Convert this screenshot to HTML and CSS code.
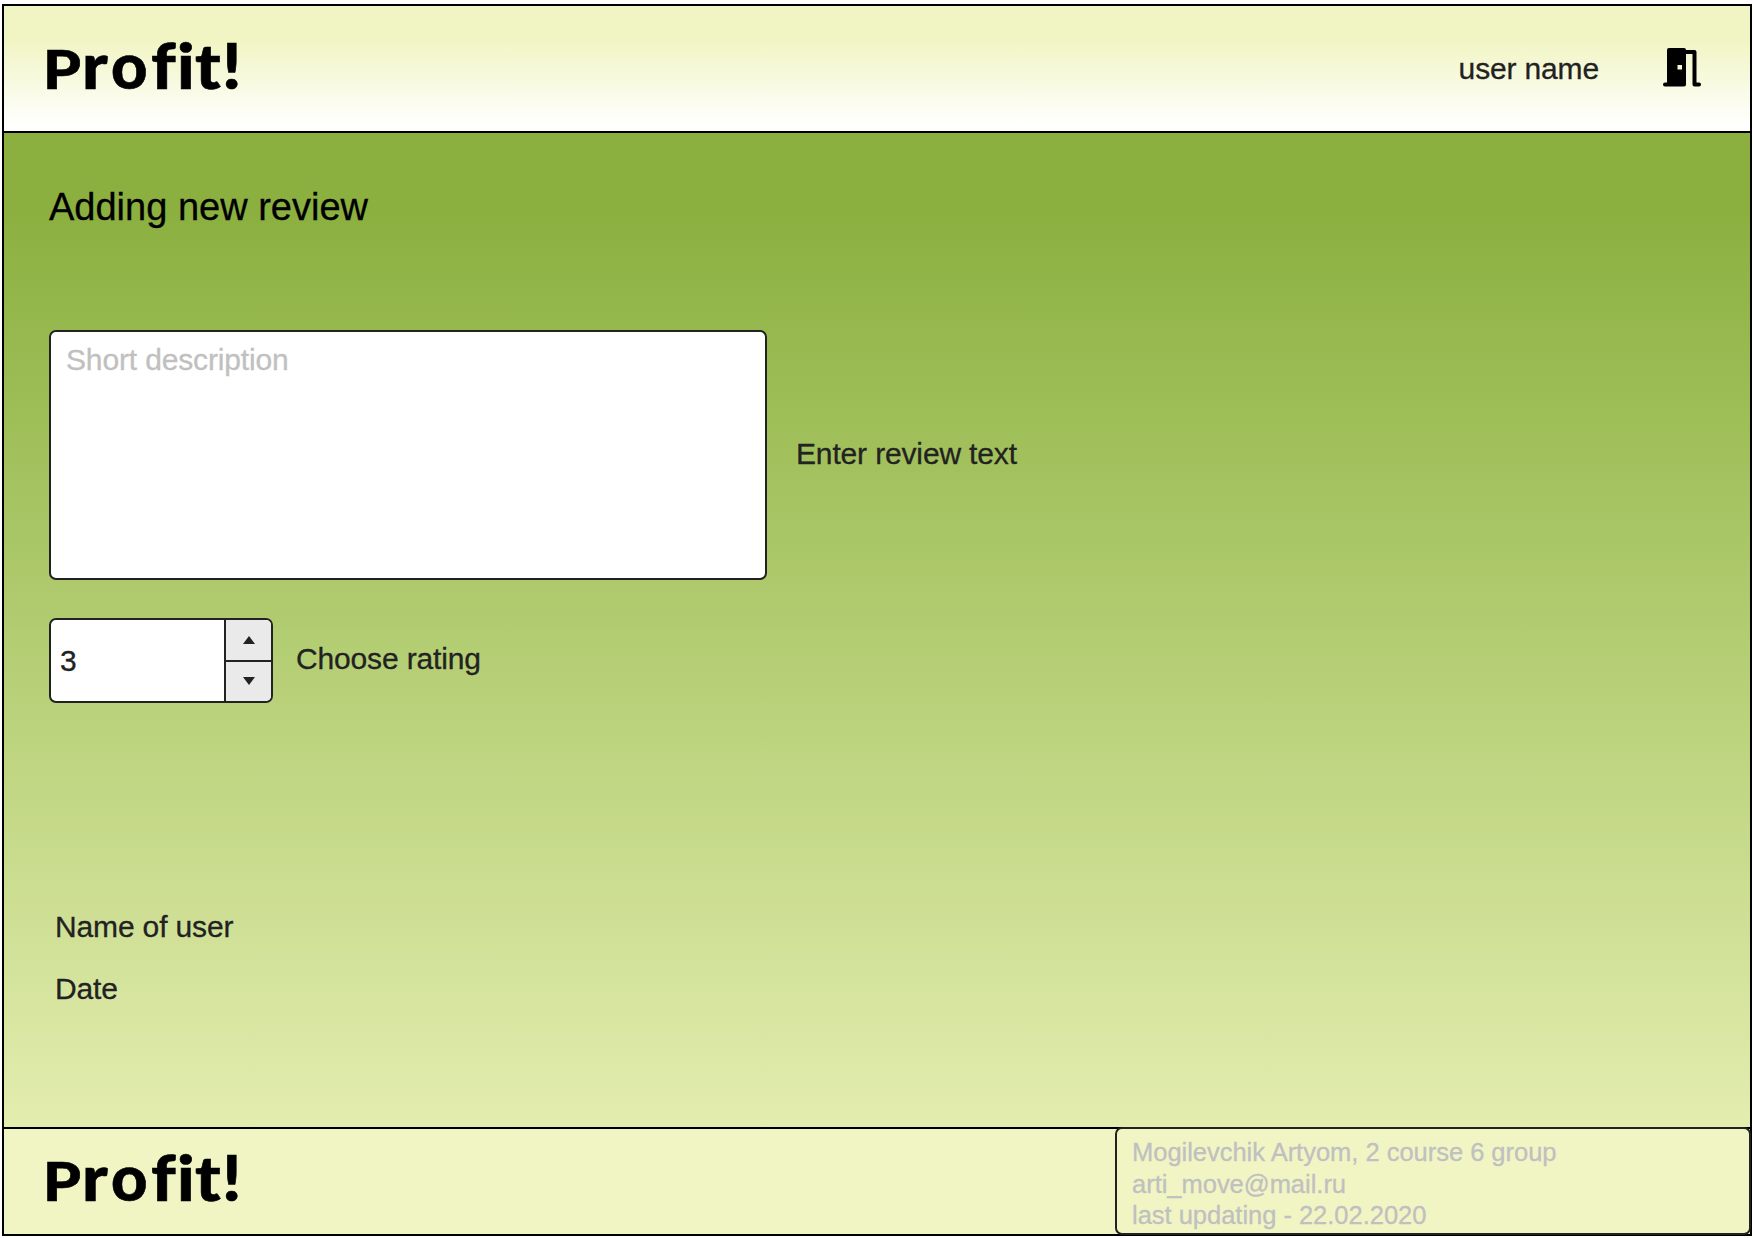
FILE: index.html
```html
<!DOCTYPE html>
<html lang="en">
<head>
<meta charset="utf-8">
<title>Profit! - Adding new review</title>
<link rel="stylesheet" href="styles.css">
</head>
<body>
<div class="page">
  <header class="header">
    <div class="logo"><span class="logo-cap">P</span><span class="l-r">r</span><span class="l-o">o</span><span class="l-f">f</span><span class="l-i">i</span><span class="l-t">t</span><span class="l-x">!</span></div>
    <div class="account">
      <span>user name</span>
      <svg class="door" viewBox="0 0 38 39" width="38" height="39">
        <path d="M4 2Q4 0 6 0H21Q23 0 23 2H31.500Q33.500 2 33.500 4V34.500H36Q38 34.500 38 36.500T36 38.500H31.500Q29.500 38.500 29.500 36.500V6H23V36.500Q23 38.500 21 38.500H2Q0 38.500 0 36.500T2 34.500H4ZM14.500 17V21.500H19V17Z" fill-rule="evenodd"/>
      </svg>
    </div>
  </header>
  <main class="main">
    <h1 class="title">Adding new review</h1>
    <label class="review">
      <span class="textarea">Short description</span>
      <span class="review-label">Enter review text</span>
    </label>
    <div class="rating">
      <div class="spinner">
        <span class="value">3</span>
        <div class="steps">
          <button class="step" aria-label="Increase"><svg width="12" height="8" viewBox="0 0 12 8"><path d="M0 8 6 0l6 8z"/></svg></button>
          <button class="step" aria-label="Decrease"><svg width="12" height="8" viewBox="0 0 12 8"><path d="M0 0h12L6 8z"/></svg></button>
        </div>
      </div>
      <span class="rating-label">Choose rating</span>
    </div>
    <div class="meta">
      <p>Name of user</p>
      <p>Date</p>
    </div>
  </main>
  <footer class="footer">
    <div class="logo"><span class="logo-cap">P</span><span class="l-r">r</span><span class="l-o">o</span><span class="l-f">f</span><span class="l-i">i</span><span class="l-t">t</span><span class="l-x">!</span></div>
    <div class="credits">Mogilevchik Artyom, 2 course 6 group<br>arti_move@mail.ru<br>last updating - 22.02.2020</div>
  </footer>
</div>
</body>
</html>
```
FILE: styles.css
```css
* { box-sizing: border-box; }
body {
  margin: 0;
  background: #fff;
  color: #222;
  font: 30px/36px "Liberation Sans", Arial, sans-serif;
  letter-spacing: -0.15px;
  -webkit-text-stroke: 0.3px currentColor;
}
.page {
  width: 1750px;
  height: 1232px;
  margin: 4px 0 0 2px;
  border: 2px solid #000;
  display: flex;
  flex-direction: column;
}
.header {
  height: 127px;
  flex: none;
  border-bottom: 2px solid #000;
  background: linear-gradient(#f1f5c4 0, #f1f5c4 28%, #fff 96%);
  display: flex;
  justify-content: space-between;
  padding: 0 49px 0 44px;
}
.logo {
  display: flex;
  align-items: baseline;
  height: 90px;
  padding-top: 22px;
  margin-left: -5px;
  color: #000;
  font: 900 62px/74px Lato, sans-serif;
  letter-spacing: 0;
  -webkit-text-stroke: 0.6px #000;
}
.logo span { display: block; transform: scaleX(1.1); transform-origin: 0 50%; }
.logo .logo-cap { width: 39px; font-size: 54px; transform: scaleX(1.12); }
.l-r { width: 29px; }
.logo .l-o { width: 40px; transform: scaleX(1.02); }
.l-f { width: 26px; }
.l-i { width: 18px; }
.l-t { width: 27px; }
.account {
  display: flex;
  align-items: flex-start;
  gap: 64px;
  padding-top: 45px;
}
.door { margin-top: -3px; fill: #000; }
.main {
  flex: 1;
  background: linear-gradient(#8bb040 0, #8bb040 8%, #b1cc70 49%, #e3edaf 100%);
  padding: 51px 45px 0;
}
.title {
  margin: 0 0 100px;
  color: #000;
  font-size: 38px;
  font-weight: 400;
  line-height: 46px;
  letter-spacing: 0;
}
.review { display: flex; align-items: center; gap: 29px; }
.review-label { padding-bottom: 2px; }
.textarea {
  width: 718px;
  height: 250px;
  border: 2px solid #222;
  border-radius: 7px;
  background: #fff;
  color: #c0c0c0;
  padding: 10px 15px;
}
.rating { display: flex; align-items: center; gap: 23px; margin-top: 38px; }
.rating-label { padding-bottom: 3px; }
.spinner {
  display: flex;
  width: 224px;
  height: 85px;
  border: 2px solid #222;
  border-radius: 7px;
  background: #fff;
  overflow: hidden;
}
.value { flex: 1; padding: 23px 9px; }
.steps {
  width: 47px;
  border-left: 2px solid #222;
  display: flex;
  flex-direction: column;
}
.step {
  flex: 1;
  border: 0;
  padding: 0;
  background: #eaeaea;
  display: flex;
  align-items: center;
  justify-content: center;
  fill: #222;
}
.step + .step { border-top: 2px solid #222; }
.meta { margin-top: 206px; padding-left: 6px; }
.meta p { margin: 0 0 26px; }
.footer {
  flex: none;
  height: 107px;
  border-top: 2px solid #000;
  background: #f1f5c4;
  display: flex;
  justify-content: space-between;
  padding-left: 44px;
}
.footer .logo { padding-top: 11px; }
.credits {
  width: 636px;
  height: 108px;
  margin: -2px -1px 0 0;
  border: 2px solid #222;
  border-radius: 7px;
  color: #c0c0c0;
  font-size: 25.500px;
  line-height: 31.500px;
  letter-spacing: -0.02px;
  padding: 8px 15px;
}
```
